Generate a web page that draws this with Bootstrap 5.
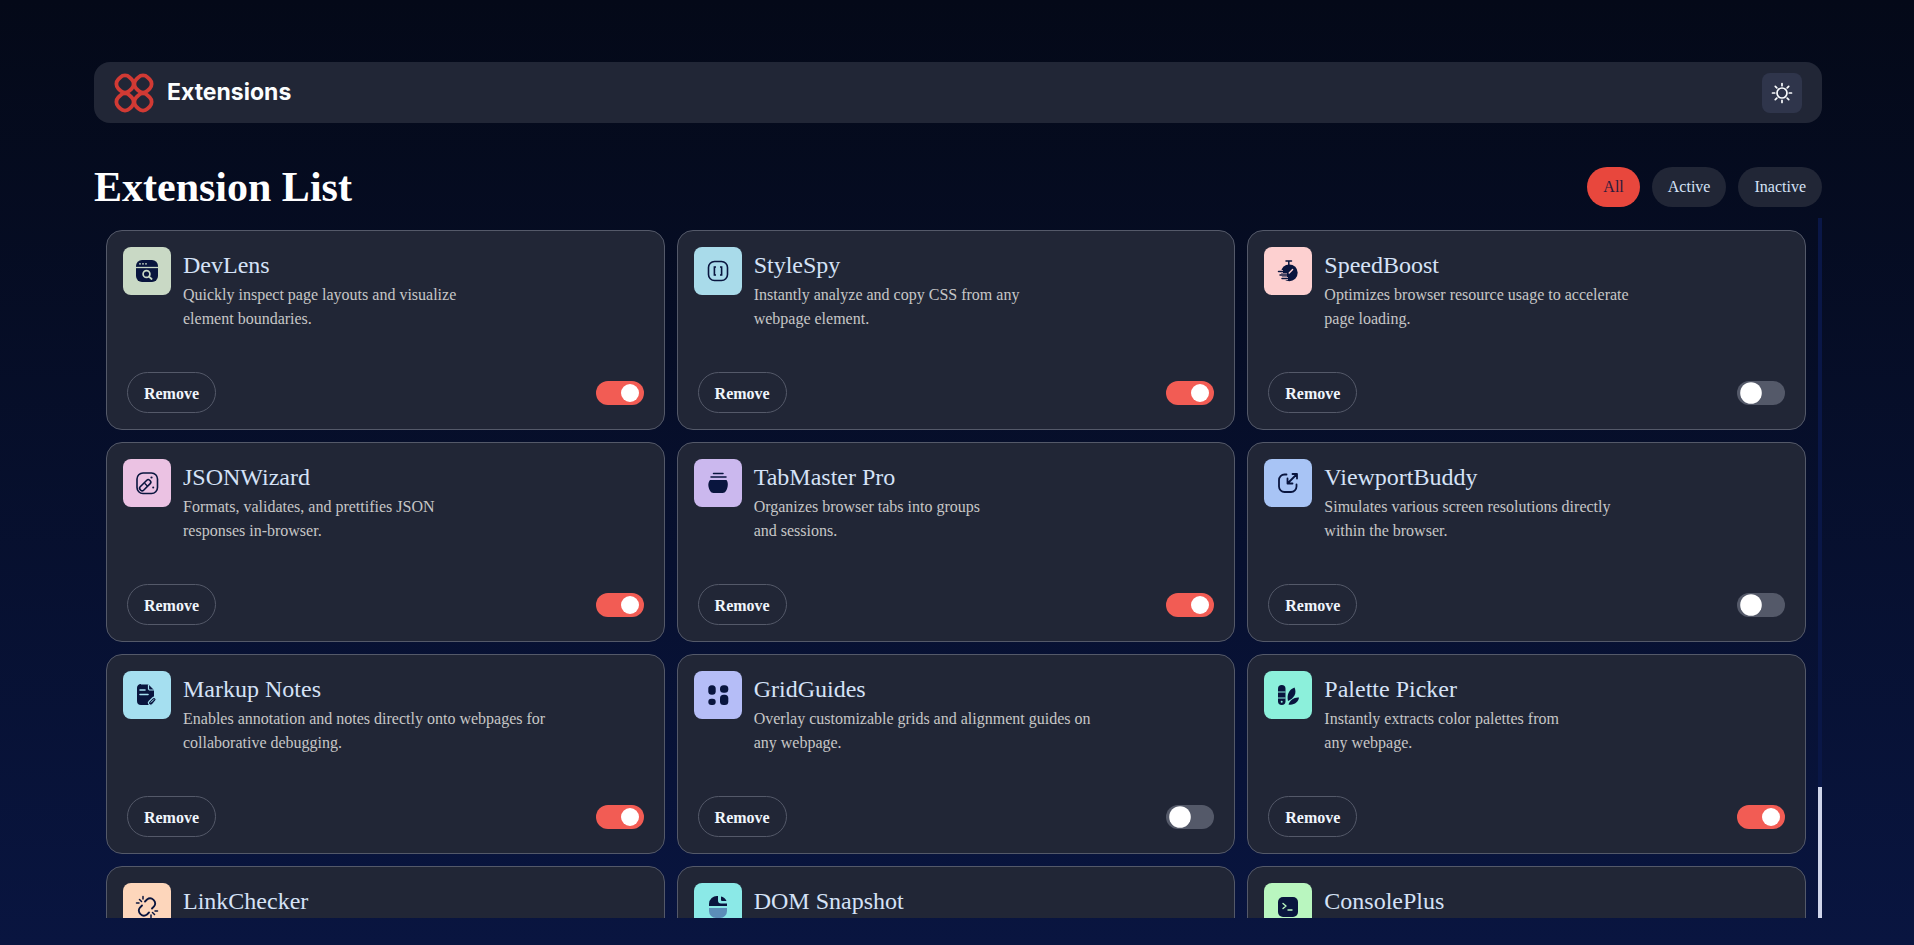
<!DOCTYPE html>
<html lang="en">

<head>
    <meta charset="UTF-8">
    <meta name="viewport" content="width=device-width, initial-scale=1.0">
    <title>Extensions</title>
    <link href="https://cdn.jsdelivr.net/npm/bootstrap@5.3.1/dist/css/bootstrap.min.css" rel="stylesheet">
    <style>
        body {
            font-family: "Liberation Serif", "Times New Roman", serif;
            background: linear-gradient(180deg, #040918 0%, #091540 100%);
            color: #fff;
            height: 945px;
            overflow: hidden;
        }

        .page-wrap {
            padding: 62px 92px 27px 94px;
            height: 945px;
        }

        .top-bar {
            height: 61px;
            background-color: #212636;
            border-radius: 16px;
            padding: 0 20px 0 19px;
        }

        .brand-name {
            font-family: Inter, "Noto Sans", sans-serif;
            font-size: 23px;
            font-weight: 700;
            color: #fbfdfe;
            margin-left: 4px;
        }

        .theme-btn {
            width: 40px;
            height: 40px;
            padding: 0;
            border: 0;
            border-radius: 8px;
            background-color: #2f354b;
        }

        .list-head {
            margin-top: 44px;
            margin-bottom: 11px;
            height: 40px;
        }

        .list-title {
            font-size: 42px;
            font-weight: 700;
            line-height: 40px;
            margin: 0;
        }

        .filter-set {
            gap: 12px;
        }

        .filter-btn {
            --bs-btn-padding-x: 16px;
            --bs-btn-padding-y: 0;
            --bs-btn-font-size: 16px;
            --bs-btn-color: #d5e2f7;
            --bs-btn-bg: #212636;
            --bs-btn-border-width: 0;
            --bs-btn-hover-color: #d5e2f7;
            --bs-btn-hover-bg: #2f354b;
            height: 40px;
            line-height: 40px;
        }

        .filter-btn.is-on {
            --bs-btn-color: #2a1a3c;
            --bs-btn-bg: #e8473d;
            --bs-btn-hover-color: #2a1a3c;
            --bs-btn-hover-bg: #e8473d;
        }

        .scroll-area {
            position: relative;
            height: 700px;
            overflow: hidden;
        }

        .scroll-track {
            position: absolute;
            top: 0;
            right: 0;
            bottom: 0;
            width: 4px;
            background-color: #0a1747;
        }

        .scroll-thumb {
            position: absolute;
            left: 0;
            right: 0;
            bottom: 0;
            height: 131px;
            background-color: #cfd5ea;
        }

        .ext-grid {
            grid-template-columns: repeat(3, 1fr);
            gap: 12px;
            padding: 12px 16px 12px 12px;
        }

        .ext-card {
            height: 200px;
            background-color: #212636;
            border: 1px solid #545969;
            border-radius: 16px;
            padding: 16px;
        }

        .ext-icon {
            width: 48px;
            height: 48px;
            border-radius: 8px;
            flex: 0 0 48px;
        }

        .ext-text {
            padding-top: 4px;
        }

        .ext-name {
            font-size: 24px;
            font-weight: 400;
            line-height: 28px;
            color: #d5e2f7;
            margin: 0 0 4px;
        }

        .ext-desc {
            font-size: 16px;
            line-height: 24.4px;
            color: #c7c7c7;
            margin: 0;
        }

        .ext-foot {
            padding: 0 4px;
        }

        .remove-btn {
            --bs-btn-padding-x: 0;
            --bs-btn-padding-y: 0;
            --bs-btn-font-size: 16px;
            --bs-btn-font-weight: 700;
            --bs-btn-color: #f0f5fc;
            --bs-btn-bg: transparent;
            --bs-btn-border-color: #545969;
            --bs-btn-hover-color: #f0f5fc;
            --bs-btn-hover-border-color: #545969;
            height: 41px;
            width: 89px;
            line-height: 41px;
        }

        .form-switch .ext-toggle {
            width: 48px;
            height: 24px;
            margin: 0;
            border: 0;
            background-color: #545969;
            background-position: 2px center;
            --bs-form-switch-bg: url("data:image/svg+xml,<svg xmlns='http://www.w3.org/2000/svg' viewBox='-4 -4 8 8'><circle r='3.6' fill='%23fff'/></svg>");
        }

        .form-switch .ext-toggle:checked {
            background-color: #f25c54;
            background-position: 22px center;
        }

        .form-switch .ext-toggle:focus {
            box-shadow: none;
        }

        .toggle-wrap {
            padding: 0;
            margin: 0;
            min-height: 0;
        }
    </style>
</head>

<body>
    <div class="page-wrap d-flex flex-column">
        <header class="top-bar d-flex justify-content-between align-items-center">
            <div class="d-flex align-items-center gap-2">
                <svg width="42" height="42" viewBox="0 0 42 42" fill="none" stroke="#d13a34" stroke-width="3.8">
                    <rect x="-8" y="-8" width="16" height="16" rx="6.500" transform="translate(12 12) rotate(45)"/>
                    <rect x="-8" y="-8" width="16" height="16" rx="6.500" transform="translate(30 12) rotate(45)"/>
                    <rect x="-8" y="-8" width="16" height="16" rx="6.500" transform="translate(12 30) rotate(45)"/>
                    <rect x="-8" y="-8" width="16" height="16" rx="6.500" transform="translate(30 30) rotate(45)"/>
                </svg>
                <span class="brand-name">Extensions</span>
            </div>
            <button class="theme-btn d-flex align-items-center justify-content-center" type="button" aria-label="Theme">
                <svg width="22" height="22" viewBox="0 0 22 22" fill="none" stroke="#fbfdfe" stroke-width="1.7" stroke-linecap="round">
                    <circle cx="11" cy="11" r="5"/>
                    <path d="M11 1.5v2.2M11 18.3v2.2M1.5 11h2.2M18.3 11h2.2M4.3 4.3l1.5 1.5M16.2 16.2l1.5 1.5M4.3 17.7l1.5-1.5M16.2 5.8l1.5-1.5"/>
                </svg>
            </button>
        </header>

        <div class="list-head d-flex justify-content-between align-items-center">
            <h1 class="list-title">Extension List</h1>
            <div class="filter-set d-flex">
                <button class="btn filter-btn is-on rounded-pill" type="button">All</button>
                <button class="btn filter-btn rounded-pill" type="button">Active</button>
                <button class="btn filter-btn rounded-pill" type="button">Inactive</button>
            </div>
        </div>

        <div class="scroll-area">
            <div id="extGrid" class="ext-grid d-grid"></div>
            <div class="scroll-track"><div class="scroll-thumb"></div></div>
        </div>
    </div>

    <script>
        const D = '#09153e';
        const extensions = [
            { name: 'DevLens', lines: ['Quickly inspect page layouts and visualize', 'element boundaries.'], on: true, bg: '#c9d9c5',
              svg: `<rect x="1" y="1" width="22" height="22" rx="6" fill="${D}"/><path d="M1 8.500h22" stroke="#c9d9c5" stroke-width="1.300"/><circle cx="5" cy="4.800" r=".9" fill="#c9d9c5"/><circle cx="8" cy="4.800" r=".9" fill="#c9d9c5"/><circle cx="11" cy="4.800" r=".9" fill="#c9d9c5"/><circle cx="11.500" cy="15" r="3.400" fill="none" stroke="#c9d9c5" stroke-width="1.700"/><path d="M14 17.600l2.600 2.400" stroke="#c9d9c5" stroke-width="1.800" stroke-linecap="round"/>` },
            { name: 'StyleSpy', lines: ['Instantly analyze and copy CSS from any', 'webpage element.'], on: true, bg: '#a9dbea',
              svg: `<rect x="2.500" y="2.500" width="19" height="19" rx="6" fill="none" stroke="${D}" stroke-width="1.600"/><path d="M10 8H8.400v8H10M14 8h1.600v8H14" fill="none" stroke="${D}" stroke-width="1.600"/>` },
            { name: 'SpeedBoost', lines: ['Optimizes browser resource usage to accelerate', 'page loading.'], on: false, bg: '#fdd0d0',
              svg: `<path d="M10 2h5.500" stroke="${D}" stroke-width="1.500" stroke-linecap="round"/><path d="M12.800 2v4" stroke="${D}" stroke-width="1.500"/><circle cx="13.300" cy="13.800" r="8.400" fill="${D}"/><path d="M13.200 14l3.400-3.600" stroke="#fdd0d0" stroke-width="1.400" stroke-linecap="round"/><path d="M1 12.500h6M3 16h8M5 19.500h7" stroke="#fdd0d0" stroke-width="3"/><path d="M2.500 12.500h6M4 16h8M6 19.500h7" stroke="${D}" stroke-width="1.500" stroke-linecap="round"/>` },
            { name: 'JSONWizard', lines: ['Formats, validates, and prettifies JSON', 'responses in-browser.'], on: true, bg: '#ebc2e3',
              svg: `<rect x="2" y="2" width="20.500" height="20.500" rx="6" fill="none" stroke="${D}" stroke-width="1.600"/><path d="M5.800 19.200l-.6-.6a2 2 0 0 1 0-2.800l6.600-6.600a2 2 0 0 1 2.800 0l.6.6a2 2 0 0 1 0 2.800l-6.600 6.600a2 2 0 0 1-2.800 0z" fill="#ebc2e3" stroke="${D}" stroke-width="1.600"/><path d="M9.600 12.200l3 3" stroke="${D}" stroke-width="1.400"/><circle cx="16.500" cy="6.500" r="1.100" fill="${D}"/><circle cx="18.200" cy="16.600" r="1" fill="${D}"/>` },
            { name: 'TabMaster Pro', lines: ['Organizes browser tabs into groups', 'and sessions.'], on: true, bg: '#cbb8ee',
              svg: `<path d="M7.500 2.500h9.500" stroke="${D}" stroke-width="1.500" stroke-linecap="round"/><path d="M5 6h15" stroke="${D}" stroke-width="1.500" stroke-linecap="round"/><path d="M4 9h16.500c1.200 1.600 1.600 3.600 1.200 6-.5 3.500-2.200 7-5 7H7.500c-2.800 0-4.600-3.500-5.100-7-.3-2.400.3-4.400 1.600-6z" fill="${D}"/>` },
            { name: 'ViewportBuddy', lines: ['Simulates various screen resolutions directly', 'within the browser.'], on: false, bg: '#a8c4f5',
              svg: `<path d="M10.500 3.500H8.500a5.500 5.500 0 0 0-5.500 5.500v6.500a5.500 5.500 0 0 0 5.500 5.500H15a5.500 5.500 0 0 0 5.500-5.500V13.500" fill="none" stroke="${D}" stroke-width="1.800" stroke-linecap="round"/><path d="M11.500 12.500l9-9M11.500 7.500v5h5M16.500 3h4.500v4.500" fill="none" stroke="${D}" stroke-width="1.800" stroke-linecap="round" stroke-linejoin="round"/>` },
            { name: 'Markup Notes', lines: ['Enables annotation and notes directly onto webpages for', 'collaborative debugging.'], on: true, bg: '#a5dff0',
              svg: `<path d="M6 1.500h7.500l5.500 5.500v11a4 4 0 0 1-4 4H6a4 4 0 0 1-4-4v-12.500a4 4 0 0 1 4-4.500z" fill="${D}"/><path d="M13.500 1.500v4a1.500 1.500 0 0 0 1.500 1.500h4" fill="none" stroke="#a5dff0" stroke-width="1.200"/><path d="M5 7h5M5 11.500h8" stroke="#a5dff0" stroke-width="1.600" stroke-linecap="round"/><path d="M14.500 21.800l-.5-.5a2 2 0 0 1 0-2.800l3.500-3.500a2.100 2.100 0 0 1 3 3l-3.400 3.800a1.900 1.900 0 0 1-2.600.0z" fill="${D}" stroke="#a5dff0" stroke-width="1.200"/><path d="M15.800 19.500l3.200-3.200" stroke="#a5dff0" stroke-width="1"/>` },
            { name: 'GridGuides', lines: ['Overlay customizable grids and alignment guides on', 'any webpage.'], on: false, bg: '#b5bdf7',
              svg: `<rect x="2.300" y="2.300" width="7.400" height="9.400" rx="3.500" fill="${D}"/><rect x="14" y="2.300" width="8.300" height="7.400" rx="3.500" fill="${D}"/><rect x="2.300" y="15.700" width="7.400" height="6.300" rx="3" fill="${D}"/><rect x="14" y="11.700" width="8.300" height="10.300" rx="3.500" fill="${D}"/>` },
            { name: 'Palette Picker', lines: ['Instantly extracts color palettes from', 'any webpage.'], on: true, bg: '#8cf0db',
              svg: `<rect x="2" y="2" width="7.500" height="20" rx="3.750" fill="${D}"/><path d="M2 9h7.500M2 15h7.500" stroke="#8cf0db" stroke-width="1.200"/><circle cx="5.700" cy="18.700" r="1" fill="#8cf0db"/><path d="M12 18C10.500 12 13 6.500 18.500 4.500 21 10 18.500 15 12 18z" fill="${D}"/><path d="M12.500 21.500C14 17 18 14 23 14.500 22.500 19 18 22.500 12.500 21.500z" fill="${D}"/>` },
            { name: 'LinkChecker', lines: ['Scans and highlights broken links on any page.'], on: true, bg: '#fdd6bb',
              svg: `<path d="M10 6.500l2-2a5 5 0 0 1 7 7l-2 2M14 17.500l-2 2a5 5 0 0 1-7-7l2-2" fill="none" stroke="${D}" stroke-width="1.800" stroke-linecap="round"/><path d="M4.500 4.500l2 2M17.500 17.500l2 2M8 1.500V4M1.500 8H4M16 20v2.500M20 16h2.500" stroke="${D}" stroke-width="1.500" stroke-linecap="round"/>` },
            { name: 'DOM Snapshot', lines: ['Capture snapshots of the DOM state for debugging and reference.'], on: true, bg: '#8be9e7',
              svg: `<path d="M3 11V9a8 8 0 0 1 9-8v4.500a3 3 0 0 0 3 3h6V11z" fill="${D}"/><path d="M15 1.600a8 8 0 0 1 5.500 4.400H16a1 1 0 0 1-1-1z" fill="${D}"/><path d="M3 13h18v3a7 7 0 0 1-7 7h-4a7 7 0 0 1-7-7z" fill="#5b8db8"/>` },
            { name: 'ConsolePlus', lines: ['Enhanced developer console with advanced filtering and logging.'], on: true, bg: '#b9f6bf',
              svg: `<rect x="2" y="2" width="20" height="20" rx="5" fill="${D}"/><path d="M7 8.500l3 2.500-3 2.500M12 15h4" fill="none" stroke="#b9f6bf" stroke-width="1.400" stroke-linecap="round" stroke-linejoin="round"/>` },
        ];

        const grid = document.getElementById('extGrid');

        extensions.forEach(ext => {
            const card = document.createElement('div');
            card.className = 'ext-card d-flex flex-column justify-content-between';
            card.innerHTML = `
                <div class="d-flex gap-2">
                    <div class="ext-icon d-flex align-items-center justify-content-center me-1">
                        <svg width="24" height="24" viewBox="0 0 24 24">${ext.svg}</svg>
                    </div>
                    <div class="ext-text">
                        <h2 class="ext-name">${ext.name}</h2>
                        <p class="ext-desc">${ext.lines.join('<br>')}</p>
                    </div>
                </div>
                <div class="ext-foot d-flex justify-content-between align-items-center">
                    <button class="btn remove-btn rounded-pill" type="button">Remove</button>
                    <div class="form-check form-switch toggle-wrap">
                        <input class="form-check-input ext-toggle" type="checkbox" role="switch" ${ext.on ? 'checked' : ''}>
                    </div>
                </div>`;
            card.querySelector('.ext-icon').style.backgroundColor = ext.bg;
            grid.appendChild(card);
        });
    </script>
</body>

</html>
